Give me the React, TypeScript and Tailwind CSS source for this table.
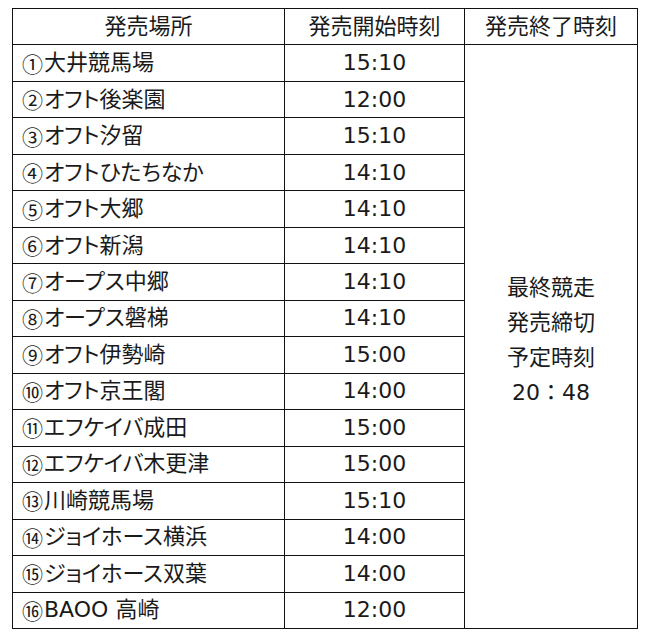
const rows: [string, string, string][] = [
  ["①", "大井競馬場", "15:10"],
  ["②", "オフト後楽園", "12:00"],
  ["③", "オフト汐留", "15:10"],
  ["④", "オフトひたちなか", "14:10"],
  ["⑤", "オフト大郷", "14:10"],
  ["⑥", "オフト新潟", "14:10"],
  ["⑦", "オープス中郷", "14:10"],
  ["⑧", "オープス磐梯", "14:10"],
  ["⑨", "オフト伊勢崎", "15:00"],
  ["⑩", "オフト京王閣", "14:00"],
  ["⑪", "エフケイバ成田", "15:00"],
  ["⑫", "エフケイバ木更津", "15:00"],
  ["⑬", "川崎競馬場", "15:10"],
  ["⑭", "ジョイホース横浜", "14:00"],
  ["⑮", "ジョイホース双葉", "14:00"],
  ["⑯", "BAOO 高崎", "12:00"],
];

export default function App() {
  return (
    <div className="w-[650px] h-[639px] bg-white pt-[8px] pl-[12px] text-[#1a1a1a] font-['DejaVu_Sans','Noto_Sans_CJK_JP',sans-serif] text-[22px] leading-none">
      <div className="grid grid-cols-[271px_179px_172px] grid-rows-[repeat(17,minmax(0,1fr))] gap-px bg-[#111] p-px w-[626px] h-[621px]">
        <div className="bg-white flex items-center justify-center">発売場所</div>
        <div className="bg-white flex items-center justify-center">発売開始時刻</div>
        <div className="bg-white flex items-center justify-center">発売終了時刻</div>

        <div className="col-start-3 row-[2/span_16] bg-white flex flex-col items-center justify-center gap-[13px] pt-[8px]">
          <span>最終競走</span>
          <span>発売締切</span>
          <span>予定時刻</span>
          <span>20：48</span>
        </div>

        {rows.map(([num, place, time]) => (
          <>
            <div key={num} className="bg-white flex items-center pl-[9px] whitespace-nowrap [font-feature-settings:'palt']">
              <span className="font-['Noto_Sans_CJK_JP',sans-serif] text-[21px] mr-[1px]">{num}</span>
              {place}
            </div>
            <div key={num + "-t"} className="bg-white flex items-center justify-center">
              {time}
            </div>
          </>
        ))}
      </div>
    </div>
  );
}
